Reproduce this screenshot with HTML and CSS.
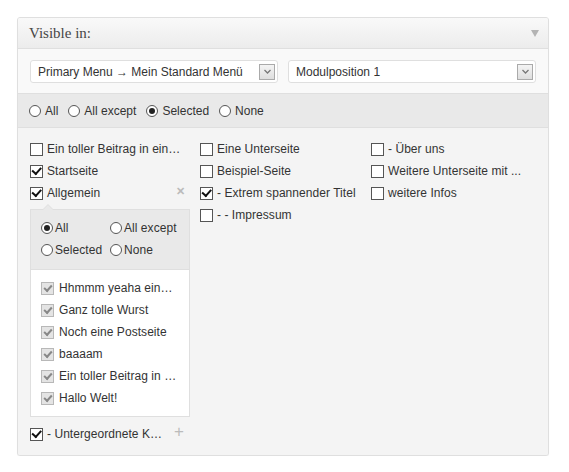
FILE: index.html
```
<!DOCTYPE html>
<html>
<head>
<meta charset="utf-8">
<link rel="stylesheet" href="styles.css">
</head>
<body>
<div class="panel">
  <div class="head">
    <span class="title">Visible in:</span>
    <span class="tri"></span>
  </div>
  <div class="selects">
    <div class="select"><span>Primary Menu → Mein Standard Menü</span><span class="arrow"><svg width="7" height="5" viewBox="0 0 7 5"><path d="M0.5 1 L3.5 4 L6.5 1" fill="none" stroke="#777" stroke-width="1.3"/></svg></span></div>
    <div class="select"><span>Modulposition 1</span><span class="arrow"><svg width="7" height="5" viewBox="0 0 7 5"><path d="M0.5 1 L3.5 4 L6.5 1" fill="none" stroke="#777" stroke-width="1.3"/></svg></span></div>
  </div>
  <div class="radios">
    <label class="opt"><span class="radio"></span>All</label>
    <label class="opt"><span class="radio"></span>All except</label>
    <label class="opt"><span class="radio on"></span>Selected</label>
    <label class="opt"><span class="radio"></span>None</label>
  </div>
  <div class="content">
    <div class="col">
      <div class="row"><span class="cb"></span>Ein toller Beitrag in ein…</div>
      <div class="row"><span class="cb on"></span>Startseite</div>
      <div class="row"><span class="cb on"></span>Allgemein<span class="close">✕</span></div>
      <div class="sub">
        <div class="subradios">
          <label class="opt"><span class="radio on"></span>All</label>
          <label class="opt"><span class="radio"></span>All except</label>
          <label class="opt"><span class="radio"></span>Selected</label>
          <label class="opt"><span class="radio"></span>None</label>
        </div>
        <div class="sublist">
          <div class="row"><span class="cb dis"></span>Hhmmm yeaha ein…</div>
          <div class="row"><span class="cb dis"></span>Ganz tolle Wurst</div>
          <div class="row"><span class="cb dis"></span>Noch eine Postseite</div>
          <div class="row"><span class="cb dis"></span>baaaam</div>
          <div class="row"><span class="cb dis"></span>Ein toller Beitrag in …</div>
          <div class="row"><span class="cb dis"></span>Hallo Welt!</div>
        </div>
      </div>
      <div class="row last"><span class="cb on"></span>- Untergeordnete K…<span class="plus">+</span></div>
    </div>
    <div class="col">
      <div class="row"><span class="cb"></span>Eine Unterseite</div>
      <div class="row"><span class="cb"></span>Beispiel-Seite</div>
      <div class="row"><span class="cb on"></span>- Extrem spannender Titel</div>
      <div class="row"><span class="cb"></span>- - Impressum</div>
    </div>
    <div class="col">
      <div class="row"><span class="cb"></span>- Über uns</div>
      <div class="row"><span class="cb"></span>Weitere Unterseite mit ...</div>
      <div class="row"><span class="cb"></span>weitere Infos</div>
    </div>
  </div>
</div>
</body>
</html>
```
FILE: styles.css
```
html, body { margin: 0; padding: 0; background: #fff; }
body { padding: 17px 0 0 17px; font-family: "Liberation Sans", Arial, sans-serif; font-size: 12px; color: #333; }
.panel { width: 530px; border: 1px solid #dfdfdf; border-radius: 3px; overflow: hidden; background: #f4f4f4; box-shadow: 0 1px 1px rgba(0,0,0,0.04); }
.head { height: 30px; display: flex; align-items: center; justify-content: space-between; padding: 0 9px 0 11px; background: linear-gradient(#f9f9f9, #ececec); border-bottom: 1px solid #dfdfdf; }
.title { font-family: "Liberation Serif", Georgia, serif; font-size: 15px; color: #464646; }
.tri { width: 0; height: 0; border-left: 4px solid transparent; border-right: 4px solid transparent; border-top: 7px solid #b3b3b3; margin-top: 1px; }
.selects { display: flex; gap: 10px; padding: 11px 12px 10px 12px; background: #f9f9f9; border-bottom: 1px solid #dfdfdf; }
.select { flex: 1; height: 21px; display: flex; align-items: center; justify-content: space-between; padding: 0 2px 0 7px; background: #fff; border: 1px solid #dfdfdf; border-radius: 3px; font-size: 12px; color: #333; }
.arrow { border: 1px solid #aaa; background: linear-gradient(#f4f4f4, #dedede); display: flex; align-items: center; justify-content: center; box-sizing: border-box; width: 16px; height: 16px; }
.radios { display: flex; gap: 10px; height: 33px; align-items: center; padding: 0 11px; background: #e9e9e9; border-bottom: 1px solid #dfdfdf; }
.opt { display: flex; align-items: center; white-space: nowrap; }
.radio { width: 12px; height: 12px; box-sizing: border-box; border: 1px solid #555; border-radius: 50%; background: #fff; margin-right: 4px; display: inline-flex; align-items: center; justify-content: center; }
.radio.on::after { content: ""; width: 6px; height: 6px; border-radius: 50%; background: #222; }
.content { display: grid; grid-template-columns: 170px 171px 1fr; padding: 10px 12px 10px 12px; background: #f4f4f4; letter-spacing: 0.05px; }
.row { height: 22px; display: flex; align-items: center; white-space: nowrap; position: relative; }
.cb { width: 13px; height: 13px; box-sizing: border-box; border: 1px solid #555; background: #fff; margin-right: 4px; flex: none; display: inline-flex; align-items: center; justify-content: center; }
.cb.on::after { content: ""; width: 7px; height: 3.5px; border-left: 2px solid #111; border-bottom: 2px solid #111; transform: translateY(-1px) rotate(-48deg); }
.cb.dis { border-color: #b8b8b8; background: #e4e4e4; margin-right: 5px; }
.cb.dis::after { content: ""; width: 6px; height: 3px; border-left: 2px solid #888; border-bottom: 2px solid #888; transform: translateY(-1px) rotate(-48deg); }
.close { position: absolute; left: 146px; top: 3px; color: #bbb; font-size: 11px; font-weight: bold; }
.plus { position: absolute; left: 144px; top: -1px; color: #bbb; font-size: 17px; }
.sub { width: 158px; margin-top: 5px; margin-bottom: 6px; border: 1px solid #dfdfdf; position: relative; background: #fff; }
.sub::before { content: ""; position: absolute; top: -6px; left: 11px; width: 0; height: 0; border-left: 6px solid transparent; border-right: 6px solid transparent; border-bottom: 6px solid #dfdfdf; }
.sub::after { content: ""; position: absolute; top: -5px; left: 12px; width: 0; height: 0; border-left: 5px solid transparent; border-right: 5px solid transparent; border-bottom: 5px solid #e9e9e9; }
.subradios { display: grid; grid-template-columns: 69px 1fr; grid-auto-rows: 22px; align-items: center; padding: 7px 0 8px 10px; background: #e9e9e9; border-bottom: 1px solid #dfdfdf; }
.subradios .radio { margin-right: 2px; }
.sublist { padding: 7px 0 7px 10px; background: #fff; }
```
